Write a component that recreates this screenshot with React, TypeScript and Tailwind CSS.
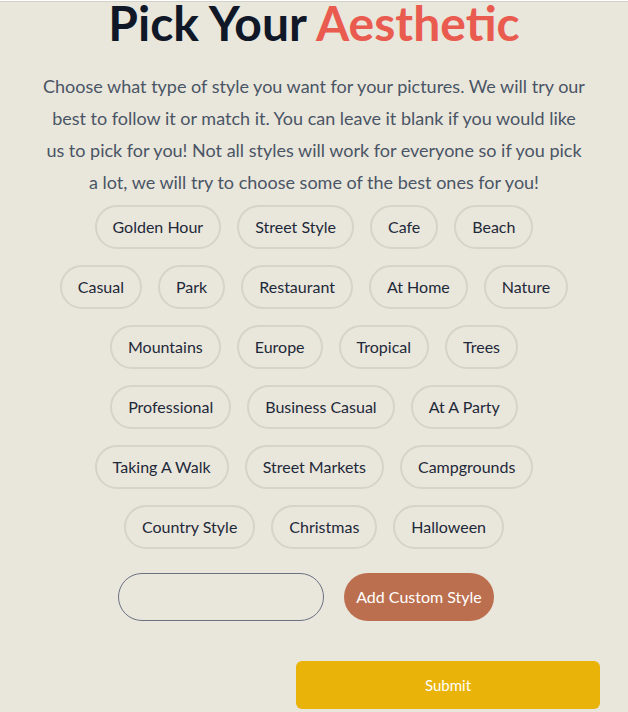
import React, { useState } from 'react';

const STYLE_ROWS = [
  ['Golden Hour', 'Street Style', 'Cafe', 'Beach'],
  ['Casual', 'Park', 'Restaurant', 'At Home', 'Nature'],
  ['Mountains', 'Europe', 'Tropical', 'Trees'],
  ['Professional', 'Business Casual', 'At A Party'],
  ['Taking A Walk', 'Street Markets', 'Campgrounds'],
  ['Country Style', 'Christmas', 'Halloween'],
];

export default function App() {
  const [custom, setCustom] = useState('');
  const [picked, setPicked] = useState<string[]>([]);

  const toggle = (s: string) =>
    setPicked((p) => (p.includes(s) ? p.filter((x) => x !== s) : [...p, s]));

  return (
    <div
      className="min-h-screen bg-[#e9e6dc] text-gray-900"
      style={{ fontFamily: '"Segoe UI", Lato, "Noto Sans", sans-serif' }}
    >
      <div className="h-px mt-px bg-[#d3d0c7]" />

      <div className="mx-auto w-[560px] flex flex-col items-center">
        {/* Heading */}
        <h1 className="text-[48px] leading-[42px] font-bold">
          Pick Your <span className="text-[#ea5b4f]">Aesthetic</span>
        </h1>

        <p className="mt-[26px] w-[544px] text-[18px] leading-8 text-center text-gray-600">
          Choose what type of style you want for your pictures. We will try our best to follow it or
          match it. You can leave it blank if you would like us to pick for you! Not all styles will
          work for everyone so if you pick a lot, we will try to choose some of the best ones for you!
        </p>

        {/* Style chips */}
        <div className="mt-[7px] flex flex-col items-center gap-4">
          {STYLE_ROWS.map((row, i) => (
            <div key={i} className="flex justify-center gap-4">
              {row.map((s) => (
                <button
                  key={s}
                  onClick={() => toggle(s)}
                  className={`h-11 px-4 rounded-full border-2 text-base ${
                    picked.includes(s)
                      ? 'border-[#bc6f4e] bg-[#bc6f4e] text-white'
                      : 'border-[#d6d3c9] text-gray-800'
                  }`}
                >
                  {s}
                </button>
              ))}
            </div>
          ))}
        </div>

        {/* Custom style */}
        <div className="mt-6 pr-4 flex items-center gap-5">
          <input
            value={custom}
            onChange={(e) => setCustom(e.target.value)}
            className="w-[206px] h-12 rounded-full border border-gray-500 bg-transparent px-4 outline-none"
          />
          <button className="h-12 px-3 rounded-full bg-[#bc6f4e] text-white text-base">
            Add Custom Style
          </button>
        </div>
      </div>

      <div className="mt-10 flex justify-end pr-7">
        <button className="w-[304px] h-12 rounded-md bg-[#e9b30a] text-white text-[15px]">
          Submit
        </button>
      </div>
    </div>
  );
}
